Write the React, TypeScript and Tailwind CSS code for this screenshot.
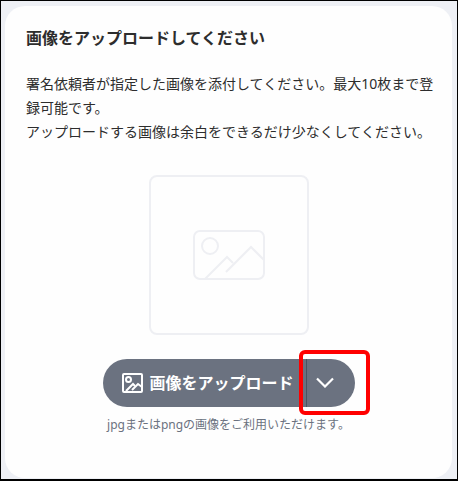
import React from "react";

const font = { fontFamily: '"Noto Sans", "Noto Sans CJK JP", sans-serif' };

function PictureIcon({ className }: { className?: string }): React.ReactElement {
  return (
    <svg viewBox="0 0 72 50" fill="none" stroke="currentColor" className={className}>
      <rect x="1" y="1" width="70" height="48" rx="6" />
      <circle cx="17" cy="16" r="8" />
      <path d="M12 49 L34 27 L40 33" />
      <path d="M33 42 L58 17 L71 30" />
    </svg>
  );
}

export default function App(): React.ReactElement {
  return (
    <div className="relative h-[481px] w-[458px] overflow-hidden border-t border-r border-l border-b-2 border-black bg-[#eef0f5] pt-[5px] pr-[5px] pb-[1px] pl-[4px]" style={font}>
      <div className="flex h-full flex-col rounded-[20px] bg-[#fefefe] px-[21px] text-[#2d2d2d]">
        <h1 className="mt-[20px] text-[16px] leading-[24px] font-bold">画像をアップロードしてください</h1>
        <p className="mt-[22px] -mr-[6px] text-[14px] leading-[24px]">
          署名依頼者が指定した画像を添付してください。最大10枚まで登録可能です。
          <br />
          アップロードする画像は余白をできるだけ少なくしてください。
        </p>

        {/* Placeholder */}
        <div className="mt-[31px] flex h-[160px] w-[160px] items-center justify-center self-center rounded-[8px] border-2 border-[#eeeff3] text-[#eeeff3]">
          <PictureIcon className="h-[50px] w-[72px] [stroke-width:2]" />
        </div>

        {/* Upload button */}
        <div className="mt-[24px] flex h-[48px] w-[252px] items-center self-center rounded-full bg-[#6b7280] text-white">
          <div className="flex h-full w-[204px] items-center border-r border-[#4b5563] pl-[19px]">
            <svg viewBox="0 0 21 20" fill="none" stroke="currentColor" strokeWidth="2" className="h-[20px] w-[21px]">
              <rect x="1" y="1" width="19" height="18" rx="1" />
              <circle cx="6.5" cy="6.5" r="2.5" />
              <path d="M4 18 L11 11 L13 13" />
              <path d="M10 17 L16 11 L20 14" />
            </svg>
            <span className="ml-[7px] text-[16px] font-bold">画像をアップロード</span>
          </div>
          <div className="flex flex-1 items-center justify-center pr-[12px] pb-[2px]">
            <svg viewBox="0 0 18 11" className="h-[11px] w-[18px]" fill="none" stroke="currentColor" strokeWidth="2.2">
              <path d="M1 1.5 L9 9.5 L17 1.5" />
            </svg>
          </div>
        </div>
        <p className="mt-[9px] self-center text-[12px] leading-[18px] text-[#6b7280]">jpgまたはpngの画像をご利用いただけます。</p>
      </div>

      {/* Red annotation */}
      <div className="absolute top-[349px] left-[298px] h-[65px] w-[71px] rounded-[6px] border-[4px] border-[#ff0000]" />
    </div>
  );
}
